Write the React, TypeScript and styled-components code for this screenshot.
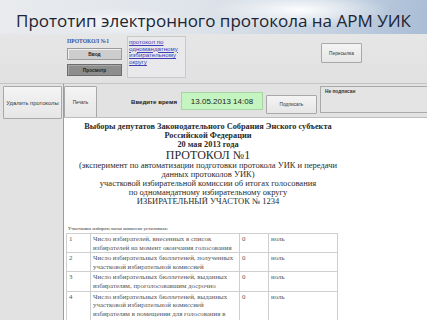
import React from "react";
import styled, { createGlobalStyle } from "styled-components";

const Global = createGlobalStyle`
  html, body { margin: 0; padding: 0; }
  body { width: 427px; height: 320px; overflow: hidden; background: #e3e3e3; }
`;

const Page = styled.div`
  width: 427px;
  height: 320px;
  overflow: hidden;
  display: flex;
  flex-direction: column;
  background: #e2e2e2;
  font-family: "Liberation Sans", Arial, sans-serif;
`;

const Header = styled.header`
  height: 34px;
  flex: none;
  display: flex;
  align-items: center;
  justify-content: center;
  background:
    radial-gradient(ellipse 90px 18px at 300px 10px, rgba(255,255,255,0.95), rgba(255,255,255,0) 100%),
    radial-gradient(ellipse 70px 14px at 120px 22px, rgba(255,255,255,0.7), rgba(255,255,255,0) 100%),
    linear-gradient(100deg, #e9ebee 0%, #dfe4ea 45%, #c7d3e1 75%, #a9bdd6 100%);
`;

const Title = styled.h1`
  margin: 6px 0 0 0;
  font-family: "Open Sans", "Noto Sans", sans-serif;
  font-weight: 400;
  font-size: 17px;
  white-space: nowrap;
  color: #1b2533;
`;

const TopPanel = styled.section`
  height: 49px;
  flex: none;
  display: flex;
  align-items: flex-start;
  padding-left: 67px;
  border-bottom: 1px solid #c4c4c4;
  background: linear-gradient(#e6e6e6, #e1e1e1);
`;

const ProtoColumn = styled.div`
  width: 55px;
  display: flex;
  flex-direction: column;
  gap: 4px;
  padding-top: 4px;
`;

const ProtoLabel = styled.div`
  font-family: "Liberation Serif", serif;
  font-weight: 700;
  font-size: 5.6px;
  color: #3a4fa0;
  line-height: 7px;
  margin-bottom: -1px;
`;

const SmallButton = styled.div<{ $dark?: boolean }>`
  height: 10px;
  display: flex;
  align-items: center;
  justify-content: center;
  font-size: 4.8px;
  font-weight: 700;
  color: #222;
  background: ${(p) => (p.$dark ? "#8d8d8d" : "#cdcdcd")};
  border: 1px solid ${(p) => (p.$dark ? "#6d6d6d" : "#9a9a9a")};
  box-shadow: inset 1px 1px 0 ${(p) => (p.$dark ? "#a8a8a8" : "#f0f0f0")};
`;

const LinkBox = styled.div`
  margin-left: 5px;
  margin-top: 2px;
  width: 59px;
  height: 42px;
  box-sizing: border-box;
  padding: 2px 1px;
  background: #e9e9ec;
  border: 1px solid #c9c9cc;
  display: flex;
  flex-direction: column;
`;

const LinkText = styled.span`
  font-size: 6.2px;
  line-height: 6.7px;
  color: #3d3db8;
  text-decoration: underline;
  white-space: nowrap;
`;

const Spacer = styled.div`
  flex: 1;
`;

const PanelButton = styled.div<{ $w: number; $h: number; $fs?: number }>`
  width: ${(p) => p.$w}px;
  height: ${(p) => p.$h}px;
  box-sizing: border-box;
  display: flex;
  align-items: center;
  justify-content: center;
  font-size: ${(p) => p.$fs ?? 4.8}px;
  color: #333;
  white-space: nowrap;
  background: linear-gradient(#f4f4f4, #e6e6e6);
  border: 1px solid #a8a8a8;
  border-radius: 1px;
`;

const SendSlot = styled.div`
  margin-top: 9px;
  margin-right: 65px;
`;

const Body = styled.div`
  flex: 1;
  display: flex;
  min-height: 0;
`;

const Sidebar = styled.aside`
  width: 64px;
  flex: none;
  padding: 2px 0 0 3px;
  box-sizing: border-box;
  border-right: 1px solid #9d9d9d;
  background: #e2e2e2;
`;

const Main = styled.div`
  flex: 1;
  display: flex;
  flex-direction: column;
  min-width: 0;
`;

const ActionRow = styled.div`
  height: 33px;
  flex: none;
  display: flex;
  align-items: flex-start;
  padding-top: 2px;
  box-sizing: border-box;
  background: #e2e2e2;
`;

const TimeLabel = styled.div`
  margin: 12px 0 0 34px;
  font-size: 6.1px;
  font-weight: 700;
  color: #222;
  white-space: nowrap;
`;

const TimeBox = styled.div`
  margin: 6px 0 0 4px;
  width: 82px;
  height: 18px;
  box-sizing: border-box;
  display: flex;
  align-items: center;
  justify-content: center;
  font-size: 8px;
  color: #1e1e1e;
  background: #c4f5c0;
  border: 1px solid #a6d4a2;
`;

const SignSlot = styled.div`
  margin: 9px 0 0 3px;
`;

const StatusBox = styled.div`
  margin: 0 0 0 3px;
  flex: 1;
  height: 27px;
  box-sizing: border-box;
  padding: 2px 4px;
  font-size: 4.8px;
  font-weight: 700;
  color: #333;
  background: #e4e4e4;
  border: 1px solid #a9a9a9;
  border-right: none;
`;

const Doc = styled.div`
  flex: 1;
  background: #fff;
  border-top: 1px solid #bdbdbd;
  padding: 4px 0 0 2px;
  font-family: "Liberation Serif", "Times New Roman", serif;
  color: #2a2a2a;
  overflow: hidden;
`;

const DocHead = styled.div`
  width: 284px;
  text-align: center;
  display: flex;
  flex-direction: column;
`;

const HeadLine = styled.div<{ $bold?: boolean; $size?: number }>`
  font-size: ${(p) => p.$size ?? (p.$bold ? 8.3 : 8.5)}px;
  font-weight: ${(p) => (p.$bold ? 700 : 400)};
  line-height: ${(p) => (p.$size ? 12 : 9)}px;
  white-space: nowrap;
`;

const Caption = styled.div`
  margin-top: 20px;
  margin-left: 2px;
  font-size: 4.8px;
  line-height: 6px;
  color: #333;
`;

const Table = styled.table`
  margin-top: 1px;
  width: 271px;
  border-collapse: collapse;
  font-size: 6.9px;
  color: #555;
  table-layout: fixed;
  td {
    border: 1px solid #cfcfcf;
    vertical-align: top;
    padding: 1px 1px 0 2px;
    line-height: 8.6px;
    height: 16px;
  }
`;

const rows = [
  ["1", "Число избирателей, внесенных в список избирателей на момент окончания голосования"],
  ["2", "Число избирательных бюллетеней, полученных участковой избирательной комиссией"],
  ["3", "Число избирательных бюллетеней, выданных избирателям, проголосовавшим досрочно"],
  ["4", "Число избирательных бюллетеней, выданных участковой избирательной комиссией избирателям в помещении для голосования в день голосования"],
];

export default function App() {
  return (
    <>
      <Global />
      <Page>
        <Header>
          <Title>Прототип электронного протокола на АРМ УИК</Title>
        </Header>
        <TopPanel>
          <ProtoColumn>
            <ProtoLabel>ПРОТОКОЛ №1</ProtoLabel>
            <SmallButton>Ввод</SmallButton>
            <SmallButton $dark>Просмотр</SmallButton>
          </ProtoColumn>
          <LinkBox>
            <LinkText>протокол по</LinkText>
            <LinkText>одномандатному</LinkText>
            <LinkText>избирательному</LinkText>
            <LinkText>округу</LinkText>
          </LinkBox>
          <Spacer />
          <SendSlot>
            <PanelButton $w={41} $h={20}>Пересылка</PanelButton>
          </SendSlot>
        </TopPanel>
        <Body>
          <Sidebar>
            <PanelButton $w={59} $h={33} $fs={5.8}>Удалить протоколы</PanelButton>
          </Sidebar>
          <Main>
            <ActionRow>
              <PanelButton $w={33} $h={33}>Печать</PanelButton>
              <TimeLabel>Введите время</TimeLabel>
              <TimeBox>13.05.2013 14:08</TimeBox>
              <SignSlot>
                <PanelButton $w={51} $h={19}>Подписать</PanelButton>
              </SignSlot>
              <StatusBox>Не подписан</StatusBox>
            </ActionRow>
            <Doc>
              <DocHead>
                <HeadLine $bold>Выборы депутатов Законодательного Собрания Энского субъекта</HeadLine>
                <HeadLine $bold>Российской Федерации</HeadLine>
                <HeadLine $bold>20 мая 2013 года</HeadLine>
                <HeadLine $size={12}>ПРОТОКОЛ №1</HeadLine>
                <HeadLine>(эксперимент по автоматизации подготовки протокола УИК и передачи</HeadLine>
                <HeadLine>данных протоколов УИК)</HeadLine>
                <HeadLine>участковой избирательной комиссии об итогах голосования</HeadLine>
                <HeadLine>по одномандатному избирательному округу</HeadLine>
                <HeadLine>ИЗБИРАТЕЛЬНЫЙ УЧАСТОК № 1234</HeadLine>
              </DocHead>
              <Caption>Участковая избирательная комиссия установила:</Caption>
              <Table>
                <colgroup>
                  <col style={{ width: 24 }} />
                  <col style={{ width: 149 }} />
                  <col style={{ width: 29 }} />
                  <col style={{ width: 69 }} />
                </colgroup>
                <tbody>
                  {rows.map(([n, t]) => (
                    <tr key={n}>
                      <td>{n}</td>
                      <td>{t}</td>
                      <td>0</td>
                      <td>ноль</td>
                    </tr>
                  ))}
                </tbody>
              </Table>
            </Doc>
          </Main>
        </Body>
      </Page>
    </>
  );
}
